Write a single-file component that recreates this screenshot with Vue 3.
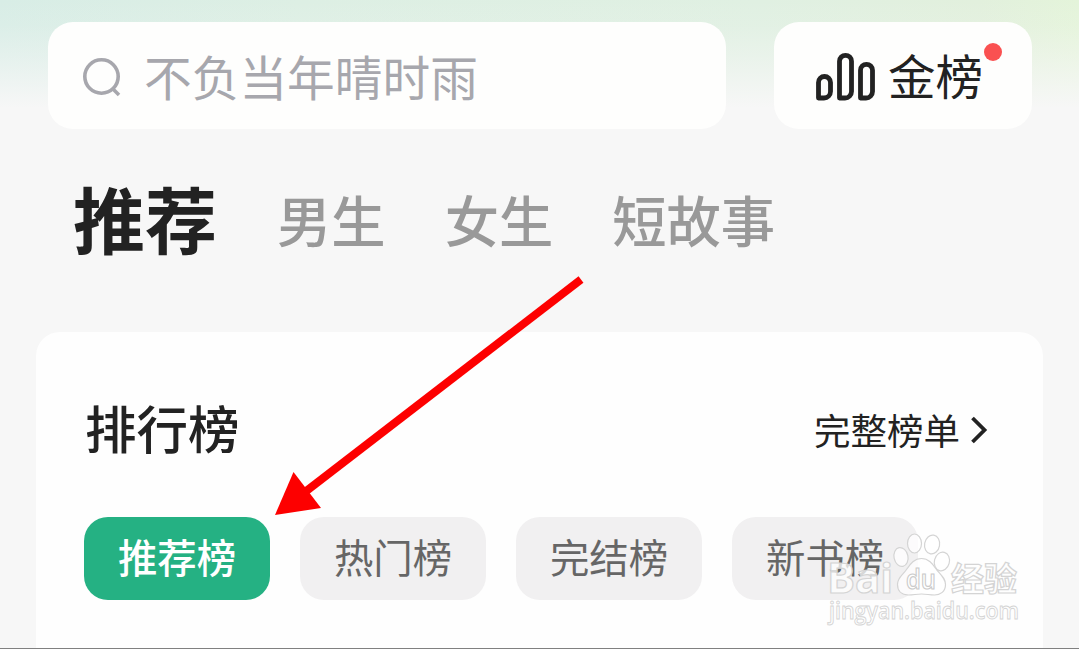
<template>
  <div class="page">
    <header class="top-bar">
      <div class="search-box">
        <svg class="search-icon" width="40" height="40" viewBox="0 0 40 40" fill="none" stroke="currentColor" stroke-width="3.6">
          <circle cx="19.5" cy="19.5" r="16.7"></circle>
          <line x1="30" y1="31" x2="37" y2="38"></line>
        </svg>
        <span class="search-text">{{ keyword }}</span>
      </div>
      <div class="gold-btn">
        <svg class="gold-icon" width="62" height="52" viewBox="0 0 62 52" fill="none" stroke="currentColor" stroke-width="4.8" stroke-linejoin="round">
          <path d="M3.5 46V30.500a6 6 0 0 1 12 0v9a6.500 6.500 0 0 1-6.500 6.500z"></path>
          <path d="M24.500 46V9.300a6 6 0 0 1 12 0v30.200a6.500 6.500 0 0 1-6.500 6.500z"></path>
          <path d="M45.500 46V18.300a6 6 0 0 1 12 0v21.200a6.500 6.500 0 0 1-6.500 6.500z"></path>
        </svg>
        <span class="gold-text">金榜</span>
        <span class="red-dot"></span>
      </div>
    </header>

    <nav class="tabs">
      <span
        v-for="(tab, index) in tabs"
        :key="tab"
        class="tab"
        :class="{ active: index === activeTab }"
        @click="activeTab = index"
      >{{ tab }}</span>
    </nav>

    <section class="panel">
      <div class="panel-header">
        <h2 class="panel-title">排行榜</h2>
        <a class="panel-more">
          <span>完整榜单</span>
          <svg width="18" height="30" viewBox="0 0 18 30" fill="none" stroke="currentColor" stroke-width="3.8">
            <polyline points="2.5 3 14.5 15 2.5 27"></polyline>
          </svg>
        </a>
      </div>
      <div class="chips">
        <button
          v-for="(rank, index) in ranks"
          :key="rank"
          class="chip"
          :class="{ active: index === activeRank }"
          @click="activeRank = index"
        >{{ rank }}</button>
      </div>
    </section>

    <!-- 指示箭头 -->
    <svg class="arrow" width="310" height="242" viewBox="0 0 310 242">
      <line x1="306" y1="4.500" x2="30" y2="217" stroke="#fd0000" stroke-width="8"></line>
      <polygon points="0,240 18.500,197 46,233" fill="#fd0000"></polygon>
    </svg>

    <!-- 水印 -->
    <svg class="watermark" width="204" height="100" viewBox="0 0 204 100">
      <g class="mark-shape">
        <ellipse cx="81" cy="27" rx="7" ry="9.500" transform="rotate(-12 81 27)"></ellipse>
        <ellipse cx="94.500" cy="13.500" rx="7" ry="9.500"></ellipse>
        <ellipse cx="112" cy="14.500" rx="7.500" ry="9.500" transform="rotate(10 112 15)"></ellipse>
        <ellipse cx="122" cy="31.500" rx="7.500" ry="9.500" transform="rotate(15 122 31)"></ellipse>
        <path d="M101.500 28.500c7 0 11 5 15 11c5 6 9 9 9 15c0 7-5 10.500-11 10.500c-5 0-8-1-13-1s-8 1-13 1c-7 0-11-4-11-10.500c0-7 5-9 9-15c4-6 8-11 15-11z"></path>
      </g>
      <g class="mark-text">
        <text x="7" y="63" font-size="41" textLength="66" lengthAdjust="spacingAndGlyphs">Bai</text>
        <text class="mark-du" x="86" y="58.500" font-size="27" textLength="30" lengthAdjust="spacingAndGlyphs">du</text>
        <text class="mark-cn" x="131" y="60.500" font-size="33">经验</text>
        <text class="mark-url" x="9" y="88.500" font-size="23" textLength="190" lengthAdjust="spacingAndGlyphs">jingyan.baidu.com</text>
      </g>
    </svg>
  </div>
</template>

<script setup>
import { ref } from 'vue'

const keyword = ref('不负当年晴时雨')

const tabs = ['推荐', '男生', '女生', '短故事']
const activeTab = ref(0)

const ranks = ['推荐榜', '热门榜', '完结榜', '新书榜']
const activeRank = ref(0)
</script>

<style>
body {
  margin: 0;
  overflow: hidden;
}
</style>

<style scoped>
.page {
  position: relative;
  width: 1079px;
  height: 649px;
  box-sizing: border-box;
  overflow: hidden;
  display: flex;
  flex-direction: column;
  padding-top: 22px;
  border-bottom: 1px solid #808080;
  background:
    linear-gradient(180deg, rgba(247, 247, 247, 0) 0, rgba(247, 247, 247, 0.1) 25px, rgba(247, 247, 247, 0.4) 55px, #f7f7f7 108px),
    linear-gradient(90deg, #d8ede6 0, #ddefe4 300px, #e0f0e2 760px, #e2f0dd 980px, #e4f4da 1079px);
  font-family: "Noto Sans CJK SC", "Noto Sans", sans-serif;
  color: #222;
}

.top-bar {
  display: flex;
  justify-content: space-between;
  height: 107px;
  padding: 0 47px 0 48px;
}

.search-box,
.gold-btn {
  display: flex;
  align-items: center;
  box-sizing: border-box;
  background: #fefefd;
  border-radius: 25px;
}

.search-box {
  width: 678px;
  padding-left: 34px;
  color: #a7a7ad;
}

.search-icon {
  margin-top: 3px;
}

.search-text {
  margin-left: 22px;
  font-size: 47.7px;
  line-height: 60px;
}

.gold-btn {
  position: relative;
  width: 258px;
  padding-left: 41px;
}

.gold-icon {
  margin-top: 4px;
}

.gold-text {
  margin-left: 11px;
  padding-bottom: 2px;
  font-size: 47.5px;
  line-height: 60px;
}

.red-dot {
  position: absolute;
  top: 21px;
  right: 30px;
  width: 18px;
  height: 18px;
  border-radius: 50%;
  background: #fa5151;
}

.tabs {
  display: flex;
  align-items: center;
  height: 203px;
  box-sizing: border-box;
  padding: 0 0 24px 73px;
  gap: 59px;
}

.tab {
  font-size: 54.3px;
  line-height: 80px;
  font-weight: 500;
  color: #999;
}

.tab.active {
  padding: 0 1px 3px 0;
  font-size: 72px;
  font-weight: 700;
  color: #222;
}

.panel {
  flex: 1;
  margin: 0 36px;
  background: #fefefe;
  border-radius: 24px 24px 0 0;
}

.panel-header {
  display: flex;
  align-items: center;
  justify-content: space-between;
  height: 185px;
  box-sizing: border-box;
  padding: 11px 55px 0 49px;
}

.panel-title {
  margin: 0;
  padding-bottom: 7px;
  font-size: 51.5px;
  line-height: 70px;
  font-weight: 500;
}

.panel-more {
  display: flex;
  align-items: center;
  gap: 10px;
  font-size: 36.5px;
  line-height: 50px;
}

.chips {
  display: flex;
  gap: 30px;
  padding-left: 48px;
}

.chip {
  width: 186px;
  height: 83px;
  padding: 0 0 5px;
  border: none;
  border-radius: 24px;
  background: #f1f0f1;
  color: #666;
  font-family: inherit;
  font-size: 39.4px;
  line-height: 78px;
  cursor: pointer;
}

.chip.active {
  background: #25b183;
  color: #fff;
  font-weight: 500;
}

.arrow {
  position: absolute;
  left: 275px;
  top: 275px;
}

.watermark {
  position: absolute;
  left: 820px;
  top: 530px;
}

.mark-shape {
  fill: rgba(255, 255, 255, 0.75);
  stroke: #d4d4d4;
  stroke-width: 1.2;
}

.mark-text {
  fill: rgba(255, 255, 255, 0.75);
  stroke: #d4d4d4;
  stroke-width: 1.2;
  font-family: "Open Sans", "Liberation Sans", sans-serif;
  font-weight: 700;
}

.mark-text .mark-du {
  fill: #fff;
  stroke: #cacaca;
  font-weight: 600;
}

.mark-text .mark-cn {
  font-family: "Noto Sans CJK SC", sans-serif;
}

.mark-text .mark-url {
  font-weight: 600;
  stroke-width: 0.9;
}
</style>
